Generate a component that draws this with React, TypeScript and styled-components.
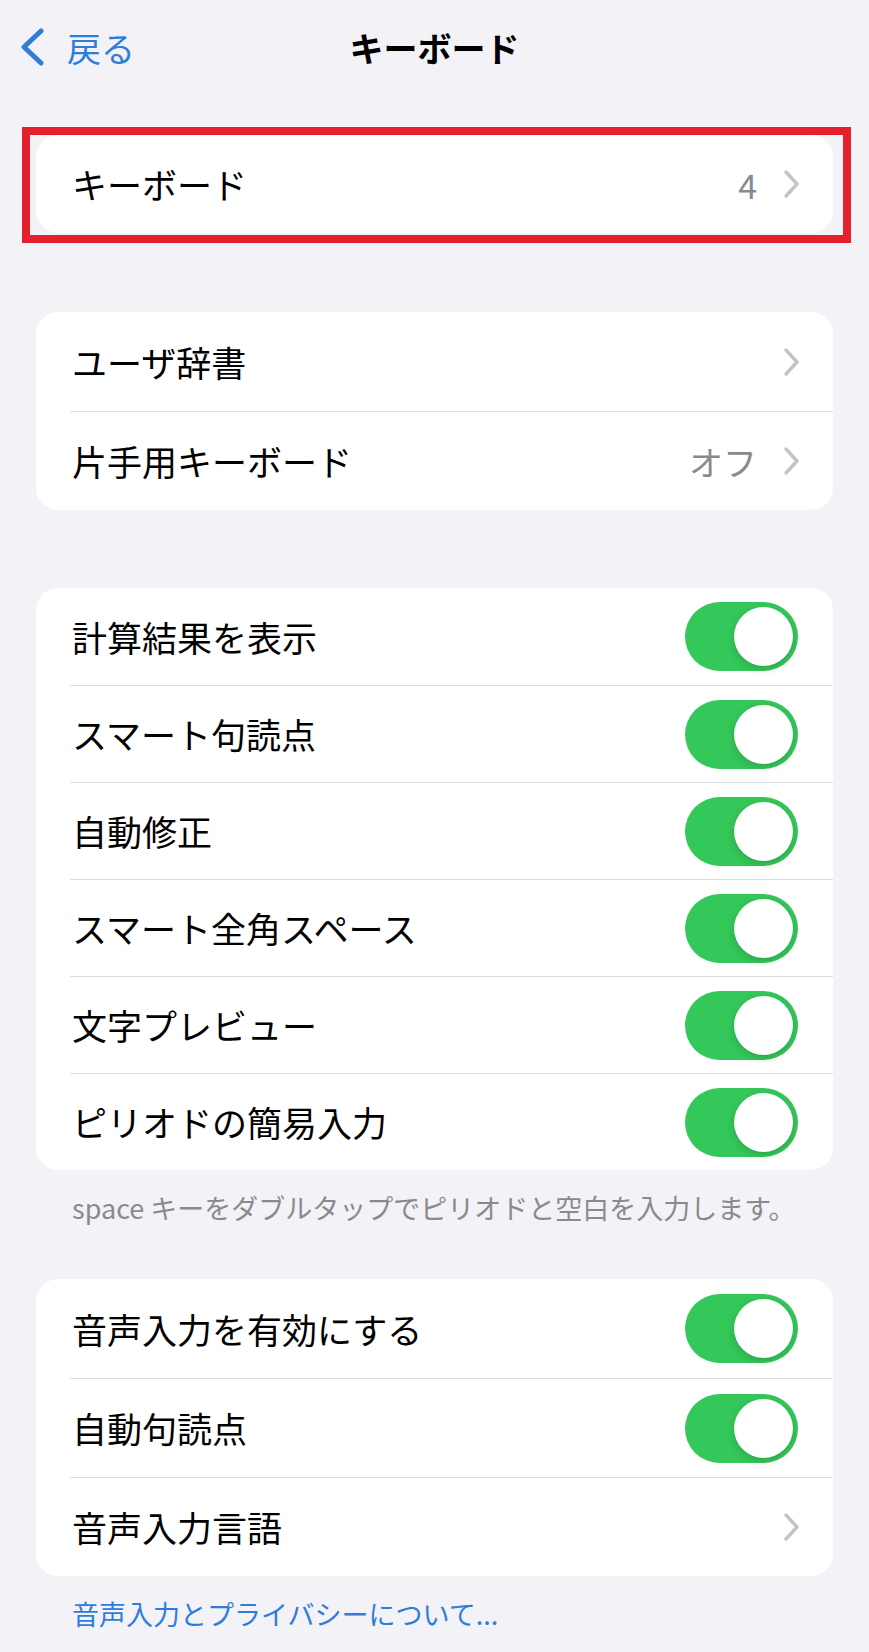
import React from 'react';
import styled, { createGlobalStyle } from 'styled-components';

const GlobalStyle = createGlobalStyle`
  html, body {
    margin: 0;
    padding: 0;
    background: #f2f2f7;
  }
  body {
    font-family: "Noto Sans CJK JP", "Noto Sans", "Liberation Sans", sans-serif;
    color: #000;
    -webkit-font-smoothing: antialiased;
  }
`;

const Page = styled.div`
  width: 869px;
  min-height: 1652px;
  background: #f2f2f7;
  box-sizing: border-box;
`;

// Navigation bar
const NavBar = styled.header`
  display: grid;
  grid-template-columns: 1fr auto 1fr;
  align-items: center;
  height: 94px;
  padding: 0 19px;
`;

const BackButton = styled.button`
  display: flex;
  align-items: center;
  gap: 22px;
  padding: 0;
  border: none;
  background: none;
  color: #2f7ddb;
  font: inherit;
  font-size: 34px;
  justify-self: start;
  cursor: pointer;
`;

const Title = styled.h1`
  margin: 0;
  font-size: 34px;
  font-weight: 700;
  letter-spacing: 0;
`;

// Red annotation frame around the first group
const Highlight = styled.div`
  margin: 33px 18px 0 22px;
  padding: 0 10px 2px 6px;
  border: 8px solid #e3202b;
`;

const Card = styled.section<{ $top?: number }>`
  margin: ${({ $top }) => $top ?? 0}px 36px 0;
  background: #fff;
  border-radius: 22px;
  overflow: hidden;
`;

const FramedCard = styled(Card)`
  margin: 0;
`;

const Row = styled.div<{ $first?: boolean; $height: number }>`
  display: flex;
  align-items: center;
  height: ${({ $height }) => $height}px;
  box-sizing: border-box;
  margin-left: 34px;
  padding: 0 33px 0 2px;
  border-top: ${({ $first }) => ($first ? 'none' : '1px solid #dedee2')};
`;

const Label = styled.span`
  flex: 1;
  font-size: 35px;
  line-height: 1.2;
`;

const Value = styled.span`
  font-size: 34px;
  color: #8a8a8e;
  margin-right: 26px;
`;

const Switch = styled.span<{ $on: boolean }>`
  position: relative;
  width: 113px;
  height: 69px;
  margin-right: 2px;
  border-radius: 35px;
  background: ${({ $on }) => ($on ? '#34c759' : '#e9e9eb')};
  flex-shrink: 0;

  &::after {
    content: '';
    position: absolute;
    top: 5px;
    left: ${({ $on }) => ($on ? '49px' : '5px')};
    width: 59px;
    height: 59px;
    border-radius: 50%;
    background: #fff;
    box-shadow: 0 3px 8px rgba(0, 0, 0, 0.15), 0 1px 1px rgba(0, 0, 0, 0.06);
  }
`;

const Footnote = styled.p<{ $top: number; $bottom: number }>`
  margin: ${({ $top }) => $top}px 36px ${({ $bottom }) => $bottom}px;
  padding-left: 36px;
  font-size: 27px;
  line-height: 36px;
  color: #8a8a8e;
  white-space: nowrap;
`;

const LinkNote = styled(Footnote)`
  color: #2f7ddb;
`;

const Chevron = () => (
  <svg width="17" height="30" viewBox="0 0 17 30" fill="none">
    <path d="M3 3 L14 15 L3 27" stroke="#c4c4c7" strokeWidth="3.4" strokeLinecap="round" strokeLinejoin="round" />
  </svg>
);

const BackChevron = () => (
  <svg width="26" height="38" viewBox="0 0 26 38" fill="none">
    <path d="M22 3 L5 19 L22 35" stroke="#2f7ddb" strokeWidth="5" strokeLinecap="round" strokeLinejoin="round" />
  </svg>
);

type Item =
  | { kind: 'link'; label: string; value?: string }
  | { kind: 'toggle'; label: string; on: boolean };

const SettingRow: React.FC<{ item: Item; first: boolean; height: number }> = ({ item, first, height }) => (
  <Row $first={first} $height={height}>
    <Label>{item.label}</Label>
    {item.kind === 'link' ? (
      <>
        {item.value && <Value>{item.value}</Value>}
        <Chevron />
      </>
    ) : (
      <Switch $on={item.on} role="switch" aria-checked={item.on} />
    )}
  </Row>
);

const keyboardItems: Item[] = [{ kind: 'link', label: 'キーボード', value: '4' }];

const dictionaryItems: Item[] = [
  { kind: 'link', label: 'ユーザ辞書' },
  { kind: 'link', label: '片手用キーボード', value: 'オフ' },
];

const typingItems: Item[] = [
  { kind: 'toggle', label: '計算結果を表示', on: true },
  { kind: 'toggle', label: 'スマート句読点', on: true },
  { kind: 'toggle', label: '自動修正', on: true },
  { kind: 'toggle', label: 'スマート全角スペース', on: true },
  { kind: 'toggle', label: '文字プレビュー', on: true },
  { kind: 'toggle', label: 'ピリオドの簡易入力', on: true },
];

const dictationItems: Item[] = [
  { kind: 'toggle', label: '音声入力を有効にする', on: true },
  { kind: 'toggle', label: '自動句読点', on: true },
  { kind: 'link', label: '音声入力言語' },
];

const renderRows = (items: Item[], height: number) =>
  items.map((item, i) => (
    <SettingRow key={item.label} item={item} first={i === 0} height={height} />
  ));

export default function App() {
  return (
    <Page>
      <GlobalStyle />
      <NavBar>
        <BackButton>
          <BackChevron />
          戻る
        </BackButton>
        <Title>キーボード</Title>
        <span />
      </NavBar>

      <Highlight>
        <FramedCard>{renderRows(keyboardItems, 98)}</FramedCard>
      </Highlight>

      <Card $top={69}>{renderRows(dictionaryItems, 99)}</Card>

      <Card $top={78}>{renderRows(typingItems, 97)}</Card>
      <Footnote $top={20} $bottom={53}>
        space キーをダブルタップでピリオドと空白を入力します。
      </Footnote>

      <Card>{renderRows(dictationItems, 99)}</Card>
      <LinkNote $top={20} $bottom={0}>
        音声入力とプライバシーについて...
      </LinkNote>
    </Page>
  );
}
